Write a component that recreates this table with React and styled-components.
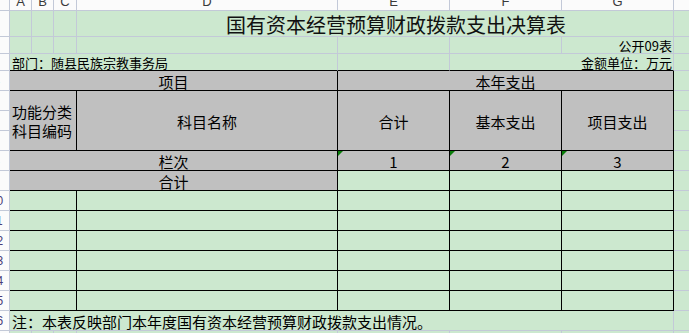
import React from 'react'
import styled, { createGlobalStyle } from 'styled-components'

const GRID = '#c3c9d8'
const GREEN = '#cce8cf'
const GRAY = '#c0c0c0'
const CJK = `"Noto Sans CJK SC", "Noto Sans", sans-serif`

const GlobalStyle = createGlobalStyle`
  html, body {
    margin: 0;
    padding: 0;
    overflow: hidden;
    background: ${GREEN};
  }
  body {
    font-family: ${CJK};
    color: #000;
  }
`

const Sheet = styled.div`
  display: grid;
  width: 690px;
  grid-template-columns: 10px 22px 22px 23px 261px 112px 112px 112px 16px;
  grid-template-rows: 11px 26px 17px 17px repeat(14, 20px);
`

const Cell = styled.div`
  grid-column: ${({ $col }) => $col} / span ${({ $span = 1 }) => $span};
  grid-row: ${({ $row }) => $row} / span ${({ $rows = 1 }) => $rows};
  box-sizing: border-box;
  position: relative;
  min-width: 0;
  display: flex;
  align-items: center;
  justify-content: ${({ $align = 'center' }) => $align};
  overflow: hidden;
  white-space: nowrap;
  background: ${GREEN};
  border-right: 1px solid ${({ $edge }) => ($edge ? '#000' : GRID)};
  border-bottom: 1px solid ${({ $base }) => ($base ? '#000' : GRID)};
`

const ColNo = styled(Cell)`
  background: #fbfbfb;
  align-items: flex-start;
  font: 13px/10px "Liberation Sans", Arial, sans-serif;
  color: #3a3a3a;

  span {
    display: block;
    margin-top: -3px;
  }
`

const RowNo = styled(Cell)`
  background: #fbfbfb;
  justify-content: flex-end;
  font: 12px "Liberation Sans", Arial, sans-serif;
  color: #4a3b78;

  span {
    flex-shrink: 0;
    width: 25px;
    text-align: center;
  }
`

const Title = styled(Cell)`
  align-items: flex-end;
  padding-left: 42px;
  font-size: 20px;
  line-height: 22px;
  color: #111;
`

const Caption = styled(Cell)`
  padding: 1px 1px 0 2px;
  font-size: 13px;
  line-height: 13px;
`

const HeadCell = styled(Cell)`
  background: ${GRAY};
  border-right-color: #000;
  border-bottom-color: #000;
  padding: 1px 0 0 ${({ $align }) => ($align === 'flex-start' ? '2px' : '0')};
  font-size: 15px;
  line-height: 15px;

  &::before {
    content: '';
    display: ${({ $flag }) => ($flag ? 'block' : 'none')};
    position: absolute;
    top: 0;
    left: 0;
    border-top: 5px solid #0a7d0a;
    border-right: 5px solid transparent;
  }
`

const Stack = styled.span`
  display: block;
  line-height: 19px;
  white-space: normal;
`

const DataCell = styled(Cell)`
  border-right-color: #000;
  border-bottom-color: #000;
`

const Remark = styled(Cell)`
  justify-content: flex-start;
  align-items: flex-end;
  padding-left: 2px;
  font-size: 15px;
  line-height: 17px;
`

const letters = ['A', 'B', 'C', 'D', 'E', 'F', 'G', '']
const dataRows = [11, 12, 13, 14, 15, 16]

const App = () => {
  return (
    <>
      <GlobalStyle />
      <Sheet>
        <ColNo $col={1} $row={1} />
        {letters.map((l, i) => (
          <ColNo key={i} $col={i + 2} $row={1}>
            <span>{l}</span>
          </ColNo>
        ))}
        {Array.from({ length: 17 }, (_, i) => (
          <RowNo key={i} $col={1} $row={i + 2}>
            <span>{i + 1}</span>
          </RowNo>
        ))}

        {/* 1: title */}
        <Cell $col={2} $row={2} />
        <Cell $col={3} $row={2} />
        <Cell $col={4} $row={2} />
        <Title $col={5} $span={4} $row={2}>国有资本经营预算财政拨款支出决算表</Title>
        <Cell $col={9} $row={2} />

        {/* 2 */}
        {[2, 3, 4, 5, 6, 7].map((c) => (
          <Cell key={c} $col={c} $row={3} />
        ))}
        <Caption $col={8} $row={3} $align="flex-end">公开09表</Caption>
        <Cell $col={9} $row={3} />

        {/* 3 */}
        <Caption $col={2} $span={4} $row={4} $base $align="flex-start">
          部门：随县民族宗教事务局
        </Caption>
        <Cell $col={6} $row={4} $base />
        <Caption $col={7} $span={2} $row={4} $base $align="flex-end">
          金额单位：万元
        </Caption>
        <Cell $col={9} $row={4} />

        {/* 4 */}
        <HeadCell $col={2} $span={4} $row={5}>项目</HeadCell>
        <HeadCell $col={6} $span={3} $row={5}>本年支出</HeadCell>
        <Cell $col={9} $row={5} />

        {/* 5-7 */}
        <HeadCell $col={2} $span={3} $row={6} $rows={3} $align="flex-start">
          <Stack>
            功能分类
            <br />
            科目编码
          </Stack>
        </HeadCell>
        <HeadCell $col={5} $row={6} $rows={3}>科目名称</HeadCell>
        <HeadCell $col={6} $row={6} $rows={3}>合计</HeadCell>
        <HeadCell $col={7} $row={6} $rows={3}>基本支出</HeadCell>
        <HeadCell $col={8} $row={6} $rows={3}>项目支出</HeadCell>
        <Cell $col={9} $row={6} />
        <Cell $col={9} $row={7} />
        <Cell $col={9} $row={8} />

        {/* 8 */}
        <HeadCell $col={2} $span={4} $row={9}>栏次</HeadCell>
        <HeadCell $col={6} $row={9} $flag>1</HeadCell>
        <HeadCell $col={7} $row={9} $flag>2</HeadCell>
        <HeadCell $col={8} $row={9} $flag>3</HeadCell>
        <Cell $col={9} $row={9} />

        {/* 9 */}
        <HeadCell $col={2} $span={4} $row={10}>合计</HeadCell>
        <DataCell $col={6} $row={10} />
        <DataCell $col={7} $row={10} />
        <DataCell $col={8} $row={10} />
        <Cell $col={9} $row={10} />

        {/* 10-15 */}
        {dataRows.map((r) => (
          <React.Fragment key={r}>
            <DataCell $col={2} $span={3} $row={r} />
            <DataCell $col={5} $row={r} />
            <DataCell $col={6} $row={r} />
            <DataCell $col={7} $row={r} />
            <DataCell $col={8} $row={r} />
            <Cell $col={9} $row={r} />
          </React.Fragment>
        ))}

        {/* 16: note */}
        <Remark $col={2} $span={7} $row={17}>
          注：本表反映部门本年度国有资本经营预算财政拨款支出情况。
        </Remark>
        <Cell $col={9} $row={17} />

        {/* 17 */}
        {[2, 3, 4, 5, 6, 7, 8, 9].map((c) => (
          <Cell key={c} $col={c} $row={18} />
        ))}
      </Sheet>
    </>
  )
}

export default App
